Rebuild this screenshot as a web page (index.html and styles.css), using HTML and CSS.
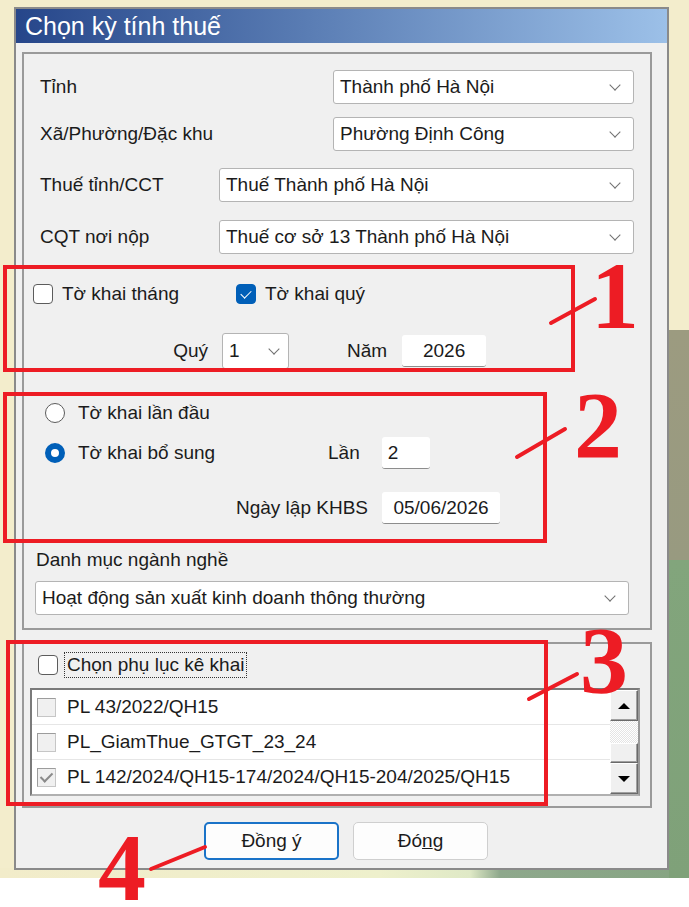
FILE: index.html
```html
<!DOCTYPE html>
<html lang="vi">

<head>
    <meta charset="UTF-8">
    <meta name="viewport" content="width=device-width, initial-scale=1.0">
    <title>Chọn kỳ tính thuế</title>
    <link rel="stylesheet" href="styles.css">
</head>

<body>
    <div class="screen">
        <div class="dialog">
            <div class="titlebar">Chọn kỳ tính thuế</div>
            <div class="dialog-body">
                <div class="group group-main">
                    <div class="field-row">
                        <span class="label">Tỉnh</span>
                        <div class="combo combo-short"><span>Thành phố Hà Nội</span><i class="chevron"></i></div>
                    </div>
                    <div class="field-row">
                        <span class="label">Xã/Phường/Đặc khu</span>
                        <div class="combo combo-short"><span>Phường Định Công</span><i class="chevron"></i></div>
                    </div>
                    <div class="field-row">
                        <span class="label">Thuế tỉnh/CCT</span>
                        <div class="combo combo-long"><span>Thuế Thành phố Hà Nội</span><i class="chevron"></i></div>
                    </div>
                    <div class="field-row">
                        <span class="label">CQT nơi nộp</span>
                        <div class="combo combo-long"><span>Thuế cơ sở 13 Thành phố Hà Nội</span><i class="chevron"></i></div>
                    </div>

                    <div class="period-row">
                        <label class="check-option check-month"><span class="checkbox"></span>Tờ khai tháng</label>
                        <label class="check-option"><span class="checkbox checked"></span>Tờ khai quý</label>
                    </div>
                    <div class="quarter-row">
                        <span class="quarter-label">Quý</span>
                        <div class="combo combo-quarter"><span>1</span><i class="chevron"></i></div>
                        <span class="year-label">Năm</span>
                        <div class="textbox textbox-year">2026</div>
                    </div>

                    <div class="radio-row radio-first">
                        <label class="radio-option"><span class="radio"></span>Tờ khai lần đầu</label>
                    </div>
                    <div class="radio-row radio-second">
                        <label class="radio-option"><span class="radio checked"></span>Tờ khai bổ sung</label>
                        <span class="label">Lần</span>
                        <div class="textbox textbox-times">2</div>
                    </div>
                    <div class="date-row">
                        <span class="date-label">Ngày lập KHBS</span>
                        <div class="textbox textbox-date">05/06/2026</div>
                    </div>

                    <div class="industry-label">Danh mục ngành nghề</div>
                    <div class="combo combo-industry"><span>Hoạt động sản xuất kinh doanh thông thường</span><i class="chevron"></i></div>
                </div>

                <div class="group group-appendix">
                    <label class="check-option appendix-toggle"><span class="checkbox"></span><span class="focus-text">Chọn phụ lục kê khai</span></label>
                    <div class="listbox">
                        <div class="list-items">
                            <div class="list-item"><span class="classic-check"></span>PL 43/2022/QH15</div>
                            <div class="list-item"><span class="classic-check"></span>PL_GiamThue_GTGT_23_24</div>
                            <div class="list-item"><span class="classic-check checked"></span>PL 142/2024/QH15-174/2024/QH15-204/2025/QH15</div>
                        </div>
                        <div class="scrollbar">
                            <div class="scroll-btn"><i class="arrow-up"></i></div>
                            <div class="scroll-track"></div>
                            <div class="scroll-thumb"></div>
                            <div class="scroll-btn scroll-btn-down"><i class="arrow-down"></i></div>
                        </div>
                    </div>
                </div>

                <div class="actions">
                    <button class="btn btn-default">Đồn<u>g</u> ý</button>
                    <button class="btn">Đó<u>n</u>g</button>
                </div>
            </div>
        </div>

        <svg class="annotations" width="689" height="907" viewBox="0 0 689 907">
            <g fill="none" stroke="#ed1c24" stroke-width="4">
                <rect x="5" y="267" width="568" height="103" />
                <rect x="5" y="394" width="540" height="147" />
                <rect x="8" y="642" width="538" height="162" />
            </g>
            <g stroke="#ed1c24" stroke-width="4" stroke-linecap="round">
                <line x1="551" y1="323" x2="595" y2="299" />
                <line x1="517" y1="457" x2="565" y2="429" />
                <line x1="529" y1="699" x2="577" y2="674" />
                <line x1="151" y1="869" x2="205" y2="847" />
            </g>
            <g class="marks" fill="#ed1c24" text-anchor="middle">
                <text x="615" y="328">1</text>
                <text x="598" y="458">2</text>
                <text x="604" y="693">3</text>
                <text x="122" y="900">4</text>
            </g>
        </svg>
    </div>
</body>

</html>
```

FILE: styles.css
```css
* {
    margin: 0;
    padding: 0;
    box-sizing: border-box;
}

body {
    font-family: "Liberation Sans", Arial, sans-serif;
    font-size: 19px;
    color: #1b1b1b;
    background: #fff;
}

.screen {
    position: relative;
    width: 689px;
    height: 907px;
    overflow: hidden;
    padding-top: 7px;
    background:
        linear-gradient(to bottom, transparent 878px, #fff 878px),
        linear-gradient(to bottom, #f3edcc 0, #f3edcc 330px, #9c9b80 330px, #989a80 560px, #82a57c 560px, #7fa179 878px) right top / 20px 878px no-repeat,
        linear-gradient(to right, #f2ecca 0, #eef0cc 380px, #dfe9c6 470px, #8ea88c 500px, #86a482 689px) 0 868px / 100% 10px no-repeat,
        #f3edcc;
}

/* dialog frame */
.dialog {
    margin-left: 14px;
    width: 655px;
    height: 863px;
    border: 2px solid #8a8a8a;
    background: #f0f0f0;
    display: flex;
    flex-direction: column;
}

.titlebar {
    height: 34px;
    padding-left: 9px;
    display: flex;
    align-items: center;
    color: #fff;
    font-size: 25px;
    background: linear-gradient(to right, #26468a, #5a7db4 45%, #9cc0e8);
}

.dialog-body {
    flex: 1;
    padding: 9px 15px 8px 6px;
    display: flex;
    flex-direction: column;
}

.group {
    border: 2px solid #9a9a9a;
}

/* main group */
.group-main {
    padding: 16px 16px 13px 0;
    display: flex;
    flex-direction: column;
}

.field-row {
    height: 34px;
    margin-bottom: 17px;
    padding-left: 16px;
    display: flex;
    align-items: center;
    justify-content: space-between;
}

.field-row:first-child {
    margin-bottom: 13px;
}

.field-row:nth-child(3) {
    margin-bottom: 18px;
}

.field-row:nth-child(4) {
    margin-bottom: 0;
}

.combo {
    height: 34px;
    padding: 0 14px 0 6px;
    display: flex;
    align-items: center;
    justify-content: space-between;
    background: #fff;
    border: 1px solid #b4b4b4;
    border-radius: 3px;
    white-space: nowrap;
}

.combo-short {
    width: 301px;
}

.combo-long {
    width: 415px;
}

.chevron {
    width: 8px;
    height: 8px;
    margin-top: -5px;
    border-right: 1px solid #707070;
    border-bottom: 1px solid #707070;
    transform: rotate(45deg);
}

.checkbox {
    width: 20px;
    height: 20px;
    border: 1.3px solid #5c5c5c;
    border-radius: 4px;
    background: #fff;
    flex-shrink: 0;
    position: relative;
}

.checkbox.checked {
    background: #005fb8;
    border-color: #005fb8;
}

.checkbox.checked::after {
    content: "";
    position: absolute;
    left: 6px;
    top: 3px;
    width: 5px;
    height: 9px;
    border-right: 1.5px solid #fff;
    border-bottom: 1.5px solid #fff;
    transform: rotate(45deg);
}

.check-option {
    display: flex;
    align-items: center;
    gap: 9px;
}

.period-row {
    height: 36px;
    margin-top: 22px;
    padding-left: 9px;
    display: flex;
    align-items: center;
}

.check-month {
    width: 203px;
}

.quarter-row {
    height: 36px;
    margin-top: 21px;
    display: flex;
    align-items: center;
}

.quarter-label {
    width: 184px;
    margin-right: 14px;
    text-align: right;
}

.combo-quarter {
    width: 67px;
    height: 36px;
    padding-right: 10px;
}

.year-label {
    margin-left: 58px;
    margin-right: 15px;
}

.textbox {
    height: 32px;
    display: flex;
    align-items: center;
    background: #fff;
    border-bottom: 1px solid #8d8d8d;
    border-radius: 3px;
    padding: 0 6px;
}

.textbox-year {
    width: 84px;
    justify-content: center;
}

.radio-row {
    display: flex;
    align-items: center;
    padding-left: 21px;
}

.radio-first {
    height: 30px;
    margin-top: 29px;
}

.radio-second {
    height: 32px;
    margin-top: 9px;
}

.radio-option {
    width: 283px;
    display: flex;
    align-items: center;
    gap: 13px;
}

.radio {
    width: 20px;
    height: 20px;
    border-radius: 50%;
    border: 1.3px solid #5c5c5c;
    background: #fff;
    flex-shrink: 0;
}

.radio.checked {
    border: 6px solid #005fb8;
}

.textbox-times {
    width: 48px;
    margin-left: 22px;
}

.date-row {
    height: 32px;
    margin-top: 23px;
    display: flex;
    align-items: center;
}

.date-label {
    width: 344px;
    text-align: right;
    margin-right: 14px;
}

.textbox-date {
    width: 118px;
    justify-content: center;
}

.industry-label {
    height: 24px;
    margin-top: 24px;
    padding-left: 12px;
    line-height: 24px;
}

.combo-industry {
    width: 594px;
    margin-top: 9px;
    margin-left: 11px;
}

/* appendix group */
.group-appendix {
    margin-top: 12px;
    padding: 8px 10px 10px 6px;
}

.appendix-toggle {
    height: 26px;
    padding-left: 8px;
    gap: 6px;
}

.focus-text {
    padding: 0 2px;
    border: 1px dotted #333;
    line-height: 24px;
}

.listbox {
    height: 108px;
    margin-top: 10px;
    display: flex;
    background: #fff;
    border: 2px solid #7a7a7a;
    border-right-color: #9a9a9a;
    border-bottom-color: #b0b0b0;
}

.list-items {
    flex: 1;
    display: flex;
    flex-direction: column;
}

.list-item {
    flex: 1;
    display: flex;
    align-items: center;
    gap: 11px;
    padding-left: 5px;
    border-bottom: 1px solid #e6e6e6;
    white-space: nowrap;
}

.list-item:last-child {
    border-bottom: none;
}

.classic-check {
    width: 19px;
    height: 19px;
    background: #f0f0f0;
    border: 1px solid #c6c6c6;
    border-top-color: #9c9c9c;
    border-left-color: #9c9c9c;
    position: relative;
}

.classic-check.checked::after {
    content: "";
    position: absolute;
    left: 5px;
    top: 1px;
    width: 5px;
    height: 10px;
    border-right: 2px solid #8a8a8a;
    border-bottom: 2px solid #8a8a8a;
    transform: rotate(45deg);
}

.scrollbar {
    width: 28px;
    display: flex;
    flex-direction: column;
    background: #f0f0f0;
}

.scroll-btn,
.scroll-thumb {
    height: 31px;
    display: flex;
    align-items: center;
    justify-content: center;
    background: #f0f0f0;
    border: 1px solid #fff;
    border-right-color: #6a6a6a;
    border-bottom-color: #6a6a6a;
    box-shadow: inset -1px -1px 0 #a0a0a0;
}

.scroll-track {
    height: 22px;
    background: repeating-conic-gradient(#ffffff 0 25%, #e4e4e4 0 50%) 0 0 / 2px 2px;
}

.scroll-thumb {
    height: 20px;
}

.arrow-up {
    border-left: 6px solid transparent;
    border-right: 6px solid transparent;
    border-bottom: 6px solid #000;
}

.arrow-down {
    border-left: 6px solid transparent;
    border-right: 6px solid transparent;
    border-top: 6px solid #000;
}

/* buttons */
.actions {
    margin-top: 14px;
    padding-left: 182px;
    display: flex;
    gap: 14px;
}

.btn {
    width: 135px;
    height: 38px;
    font-family: inherit;
    font-size: 19px;
    color: #1b1b1b;
    background: #fdfdfd;
    border: 1px solid #cfcfcf;
    border-radius: 5px;
}

.btn-default {
    border: 2px solid #1a73c8;
}

/* red annotations drawn over the screenshot */
.annotations {
    position: absolute;
    left: 0;
    top: 0;
    pointer-events: none;
}

.marks {
    font-family: "Liberation Serif", "Times New Roman", serif;
    font-weight: bold;
    font-size: 96px;
}
```
